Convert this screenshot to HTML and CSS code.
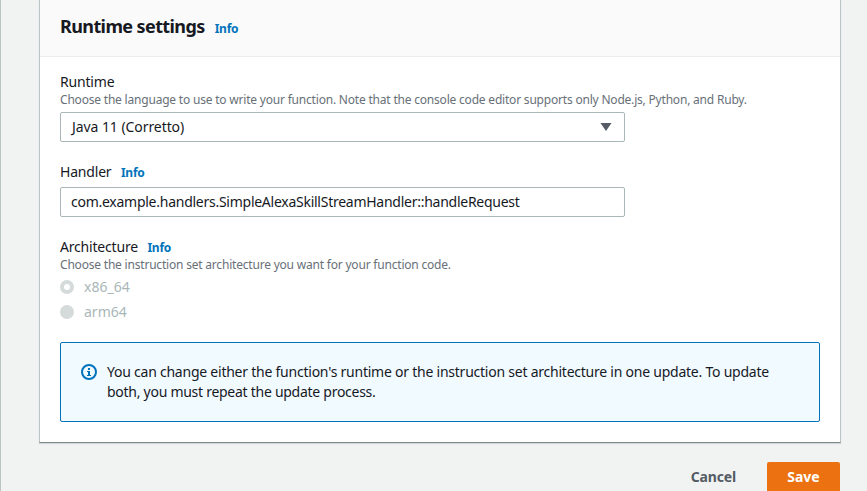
FILE: index.html
```html
<!DOCTYPE html>
<html lang="en">
<head>
<meta charset="utf-8">
<title>Edit runtime settings</title>
<link rel="stylesheet" href="styles.css">
</head>
<body>
<main class="content">
  <section class="card">
    <header class="card-header">
      <h2>Runtime settings</h2><a class="info">Info</a>
    </header>
    <div class="card-body">
      <div class="field">
        <div class="label"><span class="label-text">Runtime</span></div>
        <div class="hint">Choose the language to use to write your function. Note that the console code editor supports only Node.js, Python, and Ruby.</div>
        <div class="control select"><span>Java 11 (Corretto)</span>
          <svg class="caret" width="12" height="8" viewBox="0 0 12 8"><path d="M.5 0h11L6 8z" fill="#545b64"/></svg>
        </div>
      </div>
      <div class="field handler">
        <div class="label"><span class="label-text">Handler</span><a class="info">Info</a></div>
        <div class="control input"><span>com.example.handlers.SimpleAlexaSkillStreamHandler::handleRequest</span></div>
      </div>
      <div class="field arch">
        <div class="label"><span class="label-text">Architecture</span><a class="info">Info</a></div>
        <div class="hint">Choose the instruction set architecture you want for your function code.</div>
        <div class="radio"><i class="dot checked"></i><span>x86_64</span></div>
        <div class="radio"><i class="dot"></i><span>arm64</span></div>
      </div>
      <div class="alert">
        <svg class="alert-icon" width="16" height="16" viewBox="0 0 16 16"><circle cx="8" cy="8" r="7" fill="none" stroke="#0073bb" stroke-width="2"/><path d="M7 4h2v2H7zM6 7h3v4h1v1H6v-1h1V8H6z" fill="#0073bb"/></svg>
        <p>You can change either the function's runtime or the instruction set architecture in one update. To update<br><span class="last-line">both, you must repeat the update process.</span></p>
      </div>
    </div>
  </section>
  <footer class="actions">
    <button class="cancel">Cancel</button>
    <button class="save">Save</button>
  </footer>
</main>
</body>
</html>
```
FILE: styles.css
```css
* { box-sizing: border-box; }
body {
  margin: 0;
  height: 491px;
  overflow: hidden;
  background: #f1f3f3;
  border-left: 1px solid #bcc3c5;
  font: 14px/20px "Noto Sans", sans-serif;
  color: #16191f;
}
.content { padding: 0 26px 0 38px; }
.card {
  height: 443px;
  background: #fff;
  border: 1px solid #bcc3c5;
  border-top: 0;
  border-bottom-color: #7d888a;
  box-shadow: 0 1px 1px #d3d8d9;
}
.card-header {
  display: flex;
  height: 57px;
  padding: 15px 20px 0;
  background: #fafafa;
  border-bottom: 1px solid #eaeded;
}
h2 { margin: 0; font-size: 18px; line-height: 23px; font-weight: 700; letter-spacing: -.6px; }
.info { color: #0073bb; font-size: 12px; font-weight: 700; line-height: 20px; margin-left: 10px; letter-spacing: -.25px; }
.card-header .info { padding-top: 4px; }
.card-body { padding: 15px 20px 0; }
.label { display: flex; height: 20px; }
.label-text { letter-spacing: -.19px; line-height: 20px; }
.label .info { line-height: 21px; margin-left: 9.5px; }
.hint { height: 16px; font-size: 12px; line-height: 16px; color: #687078; white-space: nowrap; letter-spacing: -.2px; }
.control {
  display: flex;
  align-items: center;
  justify-content: space-between;
  width: 565px;
  height: 30px;
  margin-top: 4px;
  padding: 0 12px 0 10px;
  border: 1px solid #aab7b8;
  border-radius: 2px;
}
.select { padding-left: 11px; letter-spacing: -.07px; }
.input { letter-spacing: -.26px; }
.handler, .arch { margin-top: 20px; }
.handler .control { margin-top: 5px; }
.radio { display: flex; align-items: center; height: 25px; color: #aab7b8; }
.arch .hint { height: 17px; }
.dot { width: 14px; height: 14px; margin-right: 10px; border-radius: 50%; background: #d5dbdb; }
.checked { background: #fff; border: 4px solid #d5dbdb; }
.alert {
  display: flex;
  height: 80px;
  margin-top: 18px;
  padding: 19px 20px;
  border: 1px solid #0073bb;
  border-radius: 2px;
  background: #f1faff;
}
.alert-icon { margin: 2px 10px 0 0; }
.alert p { margin: 0; white-space: nowrap; letter-spacing: -.235px; }
.last-line { letter-spacing: -.27px; }
.actions { display: flex; justify-content: flex-end; margin: 19px 1px 0 0; }
button { height: 31px; border: 0; border-radius: 2px; font: 700 14px/20px "Noto Sans", sans-serif; padding: 0 20px 1px; }
.cancel { background: none; color: #545b64; margin-right: 11px; letter-spacing: -.15px; }
.save { width: 73px; background: #ec7211; color: #fff; }
```
